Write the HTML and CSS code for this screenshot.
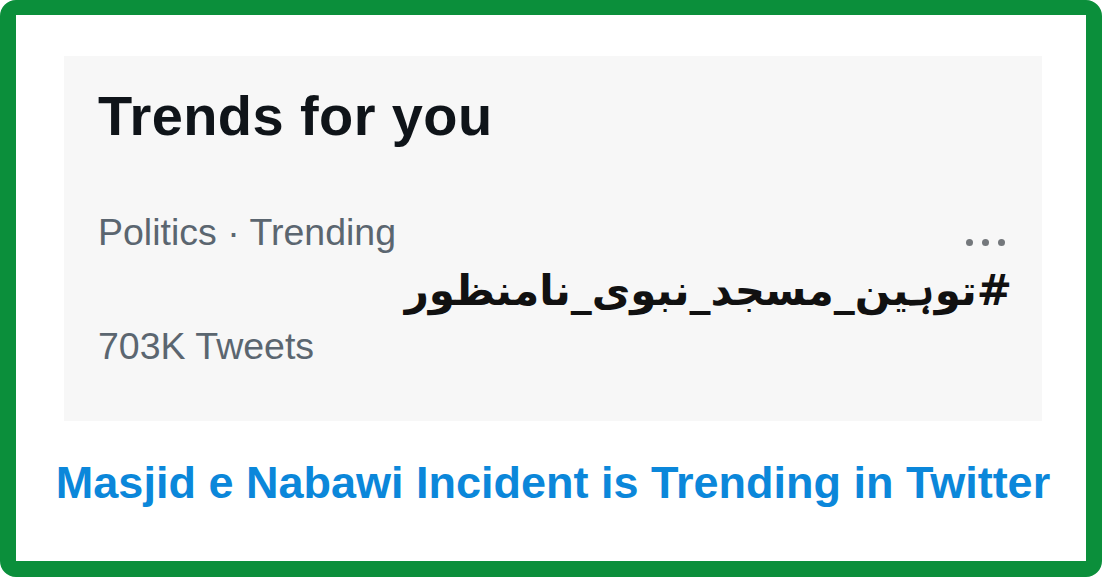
FILE: index.html
```html
<!DOCTYPE html>
<html lang="en">
  <head>
    <meta charset="UTF-8" />
    <meta name="viewport" content="width=device-width,initial-scale=1.0" />
    <title>Trends for you</title>
    <link rel="stylesheet" href="styles.css">
  </head>
  <body>
    <div class="frame">
      <div class="trends-card">
        <h2 class="trends-title">Trends for you</h2>
        <div class="trend-row">
          <span class="trend-meta">Politics · Trending</span>
          <span class="more-dots"><i></i><i></i><i></i></span>
        </div>
        <div class="trend-tag" dir="rtl">#توہین_مسجد_نبوی_نامنظور</div>
        <div class="trend-meta trend-count">703K Tweets</div>
      </div>
      <p class="caption">Masjid e Nabawi Incident is Trending in Twitter</p>
    </div>
  </body>
</html>
```

FILE: styles.css
```css
body {
  margin: 0;
  background-color: #fff;
  font-family: "Liberation Sans", Arial, sans-serif;
}
.frame {
  box-sizing: border-box;
  width: 1102px;
  height: 577px;
  border: 16px solid #0b8f3b;
  border-top-width: 15px;
  border-radius: 16px;
  background-color: #fff;
  padding: 41px 44px 0 48px;
}
.trends-card {
  box-sizing: border-box;
  height: 365px;
  background-color: #f7f7f7;
  padding: 28px 30px 0 34px;
}
.trends-title {
  margin: 0;
  font-size: 56px;
  line-height: 64px;
  font-weight: bold;
  color: #0f1419;
  letter-spacing: 0.4px;
}
.trend-row {
  display: flex;
  justify-content: space-between;
  align-items: center;
  margin-top: 62px;
}
.trend-meta {
  font-size: 37.5px;
  line-height: 44px;
  color: #5b6670;
}
.more-dots {
  display: flex;
  gap: 9px;
  margin: 20px 7px 0 0;
}
.more-dots i {
  width: 7px;
  height: 7px;
  border-radius: 50%;
  background-color: #74787c;
}
.trend-tag {
  font-family: "DejaVu Sans", sans-serif;
  font-size: 42px;
  font-weight: bold;
  line-height: 62px;
  color: #111;
  margin-top: 6px;
}
.trend-count {
  margin-top: 2px;
}
.caption {
  margin: 36px -30px 0;
  white-space: nowrap;
  text-align: center;
  font-size: 45px;
  line-height: 52px;
  font-weight: bold;
  color: #0b87da;
}
```
